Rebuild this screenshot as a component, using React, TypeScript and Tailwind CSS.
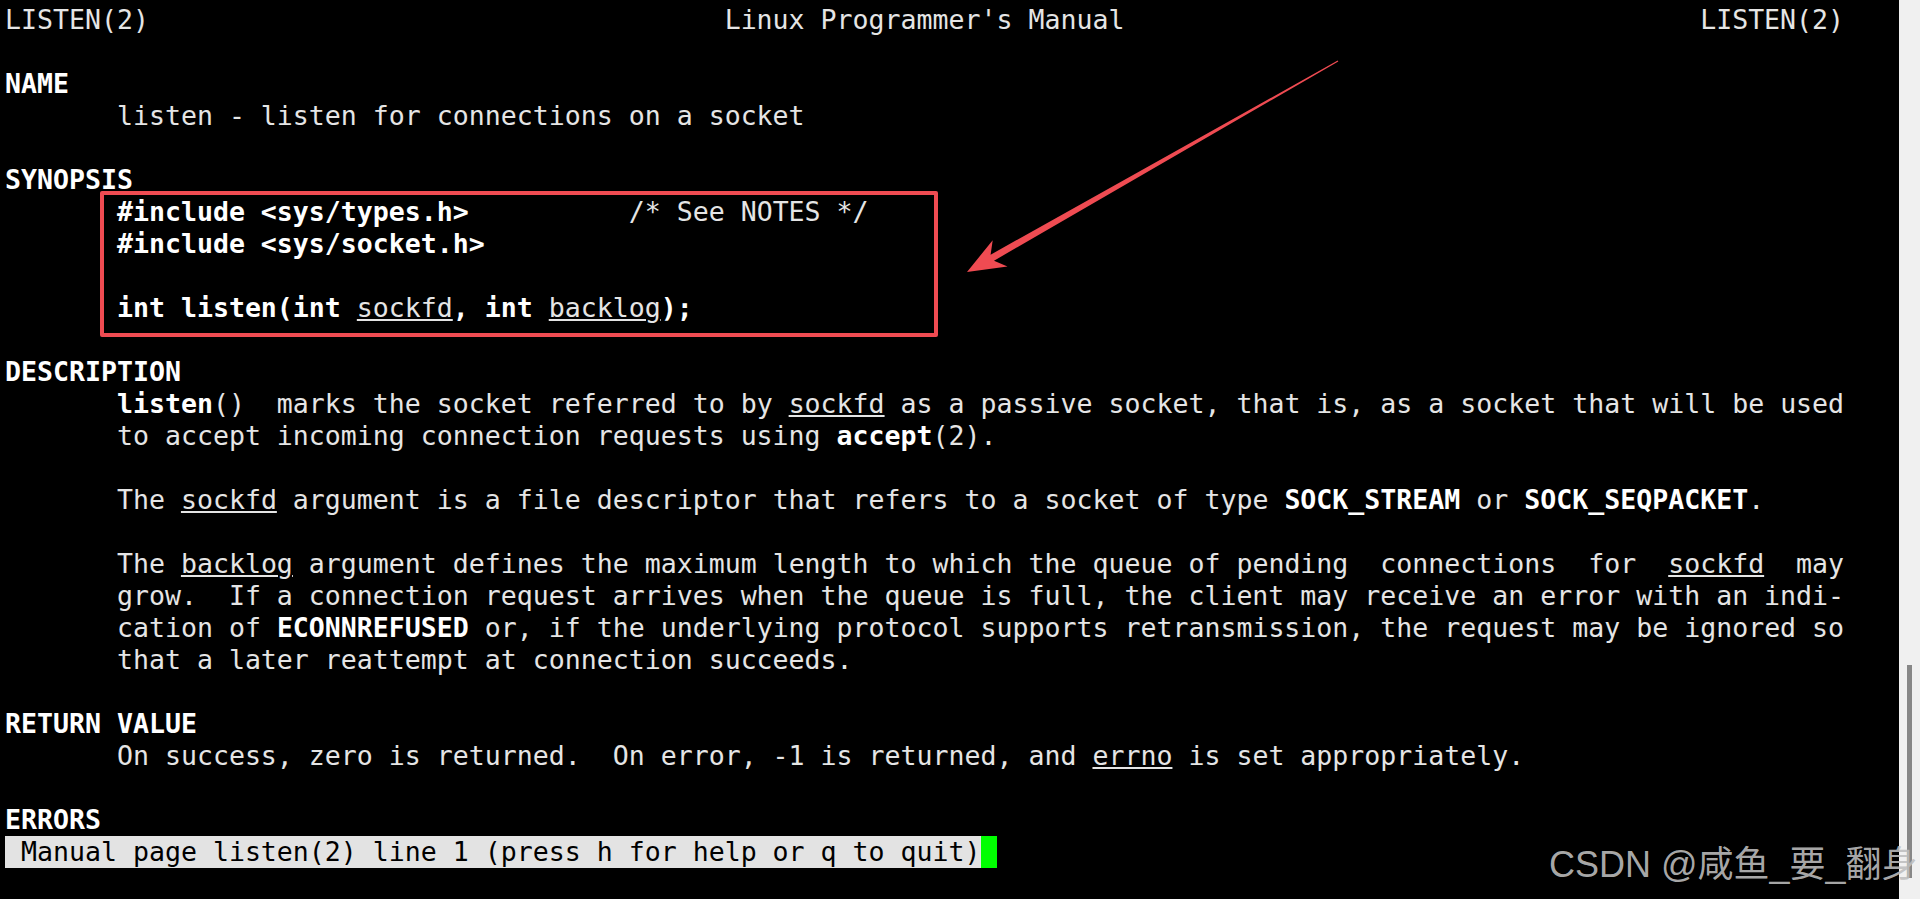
import React from "react";

type Seg = { t: string; b?: boolean; u?: boolean };
const R = (t: string): Seg => ({ t });
const B = (t: string): Seg => ({ t, b: true });
const U = (t: string): Seg => ({ t, u: true });
const sp = (n: number) => " ".repeat(n);
const I = sp(7);

const lines: Seg[][] = [
  [R("LISTEN(2)" + sp(36) + "Linux Programmer's Manual" + sp(36) + "LISTEN(2)")],
  [],
  [B("NAME")],
  [R(I + "listen - listen for connections on a socket")],
  [],
  [B("SYNOPSIS")],
  [B(I + "#include <sys/types.h>"), R(sp(10) + "/* See NOTES */")],
  [B(I + "#include <sys/socket.h>")],
  [],
  [B(I + "int listen(int "), U("sockfd"), B(", int "), U("backlog"), B(");")],
  [],
  [B("DESCRIPTION")],
  [
    R(I),
    B("listen"),
    R("()  marks the socket referred to by "),
    U("sockfd"),
    R(" as a passive socket, that is, as a socket that will be used"),
  ],
  [R(I + "to accept incoming connection requests using "), B("accept"), R("(2).")],
  [],
  [
    R(I + "The "),
    U("sockfd"),
    R(" argument is a file descriptor that refers to a socket of type "),
    B("SOCK_STREAM"),
    R(" or "),
    B("SOCK_SEQPACKET"),
    R("."),
  ],
  [],
  [
    R(I + "The "),
    U("backlog"),
    R(" argument defines the maximum length to which the queue of pending  connections  for  "),
    U("sockfd"),
    R("  may"),
  ],
  [R(I + "grow.  If a connection request arrives when the queue is full, the client may receive an error with an indi-")],
  [
    R(I + "cation of "),
    B("ECONNREFUSED"),
    R(" or, if the underlying protocol supports retransmission, the request may be ignored so"),
  ],
  [R(I + "that a later reattempt at connection succeeds.")],
  [],
  [B("RETURN VALUE")],
  [R(I + "On success, zero is returned.  On error, -1 is returned, and "), U("errno"), R(" is set appropriately.")],
  [],
  [B("ERRORS")],
];

function Line({ segs }: { segs: Seg[] }) {
  return (
    <div className="h-[32px] leading-[32px] whitespace-pre">
      {segs.map((s, i) => (
        <span
          key={i}
          className={
            (s.b ? "font-bold text-white " : "text-[#e5e5e5] ") +
            (s.u ? "underline underline-offset-[2px] decoration-[length:1.5px]" : "")
          }
        >
          {s.t}
        </span>
      ))}
      {segs.length === 0 ? " " : null}
    </div>
  );
}

export default function App() {
  return (
    <div className="relative w-[1920px] h-[899px] overflow-hidden bg-black flex">
      <div
        className="flex-1 bg-black pl-[5px] pt-[4px] text-[26.576px]"
        style={{ fontFamily: '"DejaVu Sans Mono", "Liberation Mono", monospace' }}
      >
        {lines.map((l, i) => (
          <Line key={i} segs={l} />
        ))}
        <div className="h-[32px] leading-[32px] whitespace-pre flex">
          <span className="bg-[#e3e3e3] text-black">
            {" Manual page listen(2) line 1 (press h for help or q to quit)"}
          </span>
          <span className="inline-block w-[16px] h-[32px] bg-[#00ff00]"></span>
        </div>
      </div>
      <div className="w-[21px] h-full bg-[#f0f0f0] flex flex-col">
        <div className="h-[665px]"></div>
        <div className="ml-[8px] w-[5px] h-[213px] bg-[#878787]"></div>
      </div>

      {/* red annotation box */}
      <div className="absolute left-[100px] top-[191px] w-[838px] h-[146px] border-[4px] border-[#ef4b52] rounded-[2px] pointer-events-none"></div>

      {/* red arrow */}
      <svg
        className="absolute left-0 top-0 pointer-events-none"
        width="1920"
        height="899"
        viewBox="0 0 1920 899"
      >
        <polygon
          fill="#ef4b52"
          points="1338.3,61.5 994.0,260.7 1007.5,266.4 967,272 992.7,240.2 990.6,254.7 1337.7,60.5"
        />
      </svg>

      {/* watermark */}
      <div
        className="absolute left-[1549px] top-[847px] text-[36px] leading-[36px] whitespace-pre text-[rgba(190,190,190,0.9)] pointer-events-none"
        style={{ fontFamily: '"Liberation Sans", "Noto Sans CJK SC", sans-serif' }}
      >
        CSDN @咸鱼_要_翻身
      </div>
    </div>
  );
}
